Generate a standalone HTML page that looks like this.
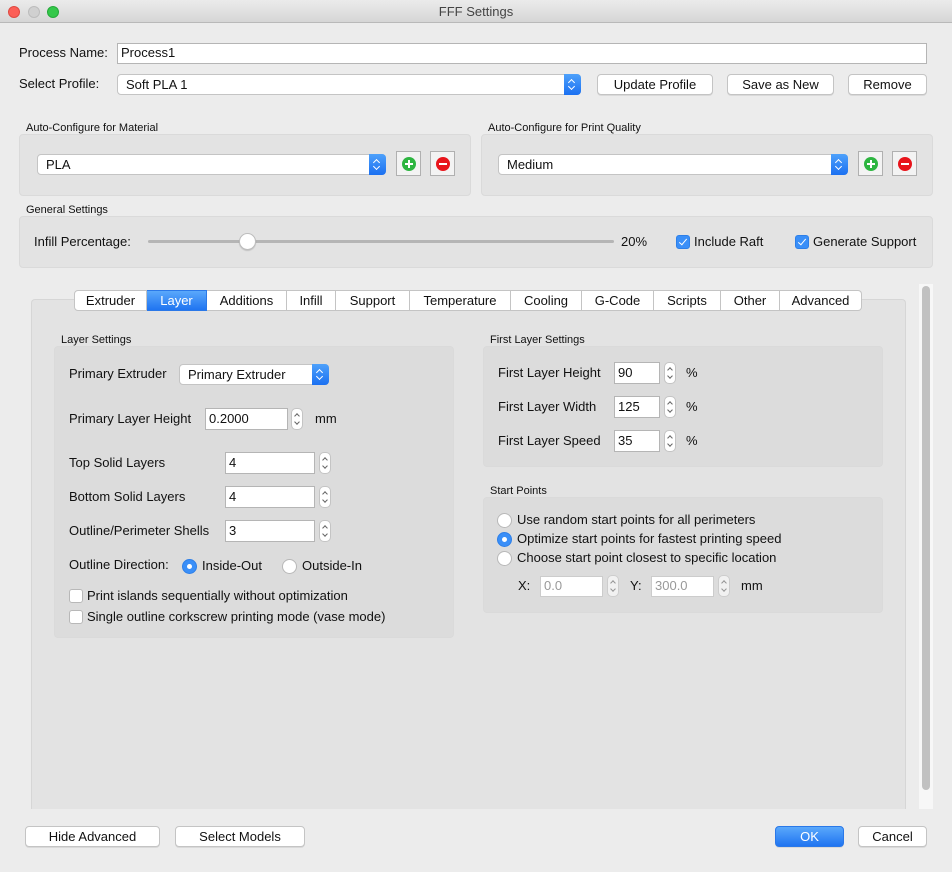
<!DOCTYPE html>
<html><head><meta charset="utf-8">
<style>
*{box-sizing:border-box}
body{margin:0;width:952px;height:872px;background:#ececec;font-family:"Liberation Sans",sans-serif;font-size:13px;color:#111;position:relative;overflow:hidden}
.a{position:absolute}
.t{position:absolute;white-space:nowrap;line-height:16px}
.s{font-size:11px}
.in{position:absolute;background:#fff;border:1px solid #b5b5b5;padding-left:3px;line-height:18px;white-space:nowrap}
.btn{position:absolute;background:#fff;border:1px solid #c4c4c4;border-radius:4px;text-align:center;line-height:19px;box-shadow:0 1px 0 rgba(0,0,0,.08)}
.pop{position:absolute;background:#fff;border:1px solid #c4c4c4;border-radius:4px;line-height:19px;padding-left:8px;white-space:nowrap}
.pop .ar{position:absolute;right:-1px;top:-1px;bottom:-1px;width:17px;background:linear-gradient(#4ea1fb,#1b70f1);border-radius:0 4px 4px 0}
.pop .ar:before,.pop .ar:after{content:"";position:absolute;left:5px;width:4px;height:4px;border-left:1.3px solid #fff;border-top:1.3px solid #fff}
.pop .ar:before{top:6px;transform:rotate(45deg)}
.pop .ar:after{top:10px;transform:rotate(225deg)}
.box{position:absolute;background:#e3e3e3;border:1px solid #dadada;border-radius:4px}
.st{position:absolute;width:12px;height:22px;background:#fff;border:1px solid #c4c4c4;border-radius:5px}
.st:before,.st:after{content:"";position:absolute;left:3px;width:3px;height:3px;border-left:1px solid #666;border-top:1px solid #666}
.st:before{top:5px;transform:rotate(45deg)}
.st:after{top:11px;transform:rotate(225deg)}
.rad{position:absolute;width:15px;height:15px;border-radius:50%;background:#fff;border:1px solid #b8b8b8}
.rad.on{background:#3a8ff8;border-color:#2d7fe8}
.rad.on:after{content:"";position:absolute;left:4px;top:4px;width:5px;height:5px;border-radius:50%;background:#fff}
.cb{position:absolute;width:14px;height:14px;background:#fff;border:1px solid #b8b8b8;border-radius:3px}
.cb.on{background:#3a8ff8;border-color:#2d7fe8}
.cb.on:after{content:"";position:absolute;left:4px;top:1px;width:3px;height:7px;border-right:1.5px solid #fff;border-bottom:1.5px solid #fff;transform:rotate(40deg)}
.ib{position:absolute;width:25px;height:25px;background:#f3f3f3;border:1px solid #b0b0b0}
.ib i{position:absolute;left:5px;top:5px;width:14px;height:14px;border-radius:50%}
.ib i:before,.ib i:after{content:"";position:absolute;background:#fff}
.tab{position:absolute;top:290px;height:21px;line-height:19px;text-align:center;background:#fff;border:1px solid #c4c4c4;border-left:none}
</style></head><body>
<!-- title bar -->
<div class="a" style="left:0;top:0;width:952px;height:23px;background:linear-gradient(#ebebeb,#d6d6d6);border-bottom:1px solid #b9b9b9"></div>
<div class="a" style="left:8px;top:6px;width:12px;height:12px;border-radius:50%;background:#fc5f57;border:1px solid #de4a42"></div>
<div class="a" style="left:28px;top:6px;width:12px;height:12px;border-radius:50%;background:#d0d0d0;border:1px solid #bcbcbc"></div>
<div class="a" style="left:47px;top:6px;width:12px;height:12px;border-radius:50%;background:#34c84a;border:1px solid #26a93a"></div>
<div class="t" style="left:0;width:952px;text-align:center;top:4px;color:#444">FFF Settings</div>

<div class="t" style="left:19px;top:45px">Process Name:</div>
<div class="in" style="left:117px;top:43px;width:810px;height:21px">Process1</div>
<div class="t" style="left:19px;top:76px">Select Profile:</div>
<div class="pop" style="left:117px;top:74px;width:464px;height:21px">Soft PLA 1<span class="ar"></span></div>
<div class="btn" style="left:597px;top:74px;width:116px;height:21px">Update Profile</div>
<div class="btn" style="left:727px;top:74px;width:107px;height:21px">Save as New</div>
<div class="btn" style="left:848px;top:74px;width:79px;height:21px">Remove</div>

<div class="t s" style="left:26px;top:120px">Auto-Configure for Material</div>
<div class="box" style="left:19px;top:134px;width:452px;height:62px"></div>
<div class="pop" style="left:37px;top:154px;width:349px;height:21px">PLA<span class="ar"></span></div>
<div class="ib" style="left:396px;top:151px"><i style="background:#2db540"></i></div>
<div class="ib" style="left:430px;top:151px"><i style="background:#e8141b"></i></div>
<div class="t s" style="left:488px;top:120px">Auto-Configure for Print Quality</div>
<div class="box" style="left:481px;top:134px;width:452px;height:62px"></div>
<div class="pop" style="left:498px;top:154px;width:350px;height:21px">Medium<span class="ar"></span></div>
<div class="ib" style="left:858px;top:151px"><i style="background:#2db540"></i></div>
<div class="ib" style="left:892px;top:151px"><i style="background:#e8141b"></i></div>
<style>.ib i:before{left:3px;top:6px;width:8px;height:2px}</style>
<style>.ib:nth-of-type(n) i[style*="2db540"]:after{left:6px;top:3px;width:2px;height:8px}</style>

<div class="t s" style="left:26px;top:202px">General Settings</div>
<div class="box" style="left:19px;top:216px;width:914px;height:52px"></div>
<div class="t" style="left:34px;top:234px">Infill Percentage:</div>
<div class="a" style="left:148px;top:240px;width:466px;height:3px;background:#b5b5b5;border-radius:2px"></div>
<div class="a" style="left:239px;top:233px;width:17px;height:17px;border-radius:50%;background:#fff;border:1px solid #bdbdbd;box-shadow:0 1px 1px rgba(0,0,0,.15)"></div>
<div class="t" style="left:621px;top:234px">20%</div>
<div class="cb on" style="left:676px;top:235px"></div>
<div class="t" style="left:694px;top:234px">Include Raft</div>
<div class="cb on" style="left:795px;top:235px"></div>
<div class="t" style="left:813px;top:234px">Generate Support</div>

<!-- tab pane -->
<div class="a" style="left:31px;top:299px;width:875px;height:510px;background:#e3e3e3;border:1px solid #d6d6d6;border-bottom:none;border-radius:4px 4px 0 0"></div>
<div class="a" style="left:919px;top:284px;width:14px;height:525px;background:#f7f7f7"></div>
<div class="a" style="left:922px;top:286px;width:8px;height:504px;background:#c1c1c1;border-radius:4px"></div>

<div class="tab" style="left:74px;width:73px;border-left:1px solid #c4c4c4;border-radius:4px 0 0 4px">Extruder</div>
<div class="tab" style="left:147px;width:60px;background:linear-gradient(#5aa8fb,#1f74f1);color:#fff;border-color:#2a78e8">Layer</div>
<div class="tab" style="left:207px;width:80px">Additions</div>
<div class="tab" style="left:287px;width:49px">Infill</div>
<div class="tab" style="left:336px;width:74px">Support</div>
<div class="tab" style="left:410px;width:101px">Temperature</div>
<div class="tab" style="left:511px;width:71px">Cooling</div>
<div class="tab" style="left:582px;width:72px">G-Code</div>
<div class="tab" style="left:654px;width:67px">Scripts</div>
<div class="tab" style="left:721px;width:59px">Other</div>
<div class="tab" style="left:780px;width:82px;border-radius:0 4px 4px 0">Advanced</div>

<!-- layer settings -->
<div class="t s" style="left:61px;top:332px">Layer Settings</div>
<div class="box" style="left:54px;top:346px;width:400px;height:292px;background:#dcdcdc"></div>
<div class="t" style="left:69px;top:366px">Primary Extruder</div>
<div class="pop" style="left:179px;top:364px;width:150px;height:21px">Primary Extruder<span class="ar"></span></div>
<div class="t" style="left:69px;top:411px">Primary Layer Height</div>
<div class="in" style="left:205px;top:408px;width:83px;height:22px;line-height:20px">0.2000</div>
<div class="st" style="left:291px;top:408px"></div>
<div class="t" style="left:315px;top:411px">mm</div>
<div class="t" style="left:69px;top:455px">Top Solid Layers</div>
<div class="in" style="left:225px;top:452px;width:90px;height:22px;line-height:20px">4</div>
<div class="st" style="left:319px;top:452px"></div>
<div class="t" style="left:69px;top:489px">Bottom Solid Layers</div>
<div class="in" style="left:225px;top:486px;width:90px;height:22px;line-height:20px">4</div>
<div class="st" style="left:319px;top:486px"></div>
<div class="t" style="left:69px;top:523px">Outline/Perimeter Shells</div>
<div class="in" style="left:225px;top:520px;width:90px;height:22px;line-height:20px">3</div>
<div class="st" style="left:319px;top:520px"></div>
<div class="t" style="left:69px;top:557px">Outline Direction:</div>
<div class="rad on" style="left:182px;top:559px"></div>
<div class="t" style="left:202px;top:558px">Inside-Out</div>
<div class="rad" style="left:282px;top:559px"></div>
<div class="t" style="left:302px;top:558px">Outside-In</div>
<div class="cb" style="left:69px;top:589px"></div>
<div class="t" style="left:87px;top:588px">Print islands sequentially without optimization</div>
<div class="cb" style="left:69px;top:610px"></div>
<div class="t" style="left:87px;top:609px">Single outline corkscrew printing mode (vase mode)</div>

<!-- first layer -->
<div class="t s" style="left:490px;top:332px">First Layer Settings</div>
<div class="box" style="left:483px;top:346px;width:400px;height:121px;background:#dcdcdc"></div>
<div class="t" style="left:498px;top:365px">First Layer Height</div>
<div class="in" style="left:614px;top:362px;width:46px;height:22px;line-height:20px">90</div>
<div class="st" style="left:664px;top:362px"></div>
<div class="t" style="left:686px;top:365px">%</div>
<div class="t" style="left:498px;top:399px">First Layer Width</div>
<div class="in" style="left:614px;top:396px;width:46px;height:22px;line-height:20px">125</div>
<div class="st" style="left:664px;top:396px"></div>
<div class="t" style="left:686px;top:399px">%</div>
<div class="t" style="left:498px;top:433px">First Layer Speed</div>
<div class="in" style="left:614px;top:430px;width:46px;height:22px;line-height:20px">35</div>
<div class="st" style="left:664px;top:430px"></div>
<div class="t" style="left:686px;top:433px">%</div>

<div class="t s" style="left:490px;top:483px">Start Points</div>
<div class="box" style="left:483px;top:497px;width:400px;height:116px;background:#dcdcdc"></div>
<div class="rad" style="left:497px;top:513px"></div>
<div class="t" style="left:517px;top:512px">Use random start points for all perimeters</div>
<div class="rad on" style="left:497px;top:532px"></div>
<div class="t" style="left:517px;top:531px">Optimize start points for fastest printing speed</div>
<div class="rad" style="left:497px;top:551px"></div>
<div class="t" style="left:517px;top:550px">Choose start point closest to specific location</div>
<div class="t" style="left:518px;top:578px">X:</div>
<div class="in" style="left:540px;top:576px;width:63px;height:21px;color:#999;border-color:#ccc">0.0</div>
<div class="st" style="left:607px;top:575px;opacity:.6"></div>
<div class="t" style="left:630px;top:578px">Y:</div>
<div class="in" style="left:651px;top:576px;width:63px;height:21px;color:#999;border-color:#ccc">300.0</div>
<div class="st" style="left:718px;top:575px;opacity:.6"></div>
<div class="t" style="left:741px;top:578px">mm</div>

<!-- bottom -->
<div class="btn" style="left:25px;top:826px;width:135px;height:21px">Hide Advanced</div>
<div class="btn" style="left:175px;top:826px;width:130px;height:21px">Select Models</div>
<div class="btn" style="left:775px;top:826px;width:69px;height:21px;background:linear-gradient(#5aa8fb,#1f74f1);color:#fff;border-color:#2a78e8">OK</div>
<div class="btn" style="left:858px;top:826px;width:69px;height:21px">Cancel</div>
</body></html>
